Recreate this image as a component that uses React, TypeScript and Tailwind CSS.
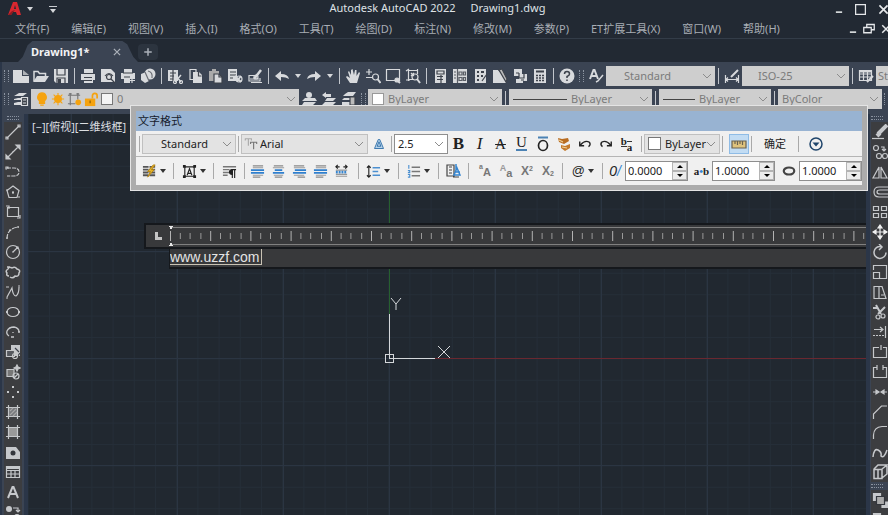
import type { ReactNode } from "react";

const MENUS = [
  "文件(F)",
  "编辑(E)",
  "视图(V)",
  "插入(I)",
  "格式(O)",
  "工具(T)",
  "绘图(D)",
  "标注(N)",
  "修改(M)",
  "参数(P)",
  "ET扩展工具(X)",
  "窗口(W)",
  "帮助(H)",
];

// 16x16 glyphs, drawn with currentColor
const GLYPHS: Record<string, ReactNode> = {
  new: (
    <>
      <path d="M0 2h9v6h7v7H0z" fill="currentColor" stroke="none" />
      <path d="M10 2l6 5h-6z" fill="#aeb1b6" stroke="none" />
    </>
  ),
  open: (
    <>
      <path d="M1 13V3.500h4l1.500 2h6V8" strokeWidth="1.500" />
      <path d="M4 8h12l-4 6H0z" fill="currentColor" stroke="none" />
    </>
  ),
  save: (
    <>
      <path d="M1 1h14v14H3l-2-2z" fill="currentColor" stroke="none" />
      <path d="M4 1v6h8V1M4 15v-5h8v5" stroke="#3d424b" />
      <path d="M5 11h3v4H5z" fill="#3d424b" stroke="none" />
    </>
  ),
  print: (
    <>
      <path d="M4 1h9v4H4z M1 6h14v6H1z M4 10h9v5H4z" fill="currentColor" stroke="none" />
      <path d="M3 5.500h11M4 9.500h8M4 12.500h8" stroke="#3d424b" />
    </>
  ),
  preview: (
    <>
      <path d="M1 1h10l4 4v9H1z" fill="currentColor" stroke="none" />
      <circle cx="9" cy="9" r="2.500" stroke="#3d424b" />
      <path d="M5 8q4-5 8 0M11 11l4 4" stroke="#3d424b" />
    </>
  ),
  plot: (
    <>
      <path d="M4 1h8v4H4z M1 5h14v6H1z M4 10h6v5H4z" fill="currentColor" stroke="none" />
      <path d="M3 5h10M4 9h6" stroke="#3d424b" />
      <path d="M9 12.500h6M12 10v5" />
    </>
  ),
  publish: (
    <>
      <circle cx="10" cy="6" r="5.500" fill="currentColor" stroke="none" />
      <path d="M1 6l5-2 3 9-4 2-4-3z" fill="currentColor" stroke="none" />
      <path d="M5 4l4 9M8 3q5 1 4 7" stroke="#6b6e75" />
    </>
  ),
  cut: (
    <>
      <path d="M1 2h10v11H1z" fill="currentColor" stroke="none" />
      <path d="M3 5h6M3 8h4M3 11h3M6 2v11" stroke="#3d424b" />
      <path d="M8 7l6 7M14 7l-6 7" strokeWidth="1.500" />
      <circle cx="8" cy="14" r="1.500" />
      <circle cx="14" cy="14" r="1.500" />
    </>
  ),
  copy: (
    <>
      <path d="M3 1.500h6v10H3z" />
      <path d="M6 4h6l3 3v8H6z" fill="currentColor" stroke="none" />
      <path d="M11.500 4v4h3" stroke="#3d424b" />
    </>
  ),
  paste: (
    <>
      <path d="M2 3h10v10H2z M5 1h4v3H5z" fill="#aaa" stroke="none" />
      <path d="M7 6h5l3 3v6H7z" fill="currentColor" stroke="#3d424b" />
      <path d="M12 6v3h3" stroke="#3d424b" />
    </>
  ),
  match: (
    <>
      <path d="M1 1h9v12H1z" fill="currentColor" stroke="none" />
      <path d="M3 4h6M3 7h6M3 10h3" stroke="#3d424b" />
      <path d="M8 8l6 6M10 13l4-5" strokeWidth="2" />
      <circle cx="12" cy="11" r="3" />
    </>
  ),
  blockedit: (
    <>
      <path d="M2 7.500h7M2 7v6h11v-3" />
      <path d="M7 11l7-9" strokeWidth="2.500" />
      <path d="M3 11h9M4 14.500h11" />
      <circle cx="9" cy="9" r="2" />
    </>
  ),
  undo: <path d="M1 8l6-5v3q7 0 8 5-3-2-8-2v4z" fill="currentColor" stroke="none" />,
  redo: <path d="M15 8L9 3v3q-7 0-8 5 3-2 8-2v4z" fill="currentColor" stroke="none" />,
  pan: (
    <path
      d="M5 15L1 9l1-1 3 2L3 4l1-1 2 4V2l1.500-1L9 7l1-5h1.500v6L14 4l1 1-3 10z"
      fill="currentColor"
      stroke="none"
    />
  ),
  zoomrt: (
    <>
      <path d="M1 4h6M4 1v6M1 9.500h6" />
      <circle cx="10.500" cy="9" r="3" />
      <path d="M12.500 11l3 4" strokeWidth="2" />
    </>
  ),
  zoomwin: (
    <>
      <path d="M1.500 1.500h13v11h-13z" />
      <circle cx="12" cy="12" r="2" fill="currentColor" />
      <path d="M13 13l2 2" strokeWidth="2" />
    </>
  ),
  zoomprev: (
    <>
      <path d="M3 2.500h10M3 11.500h6M3.500 1v12M12.500 1v5M1 3l3-2M1 12h4" />
      <path d="M6 5l3 3M9 5L6 8" />
      <circle cx="10" cy="9" r="3" />
      <path d="M12 11l3 4" strokeWidth="2" />
    </>
  ),
  props: (
    <>
      <path d="M3 1h11v14H3z" fill="currentColor" stroke="none" />
      <path d="M5 3h7v3H5zM5 8.500h6M5 11.500h6" stroke="#3d424b" />
      <path d="M9 7v8" stroke="#3d424b" />
    </>
  ),
  design: (
    <>
      <path d="M1 1h14v14H1z" fill="currentColor" stroke="none" />
      <path
        d="M5.500 1v14M7 4h3v3H7zM11.500 4h2v3h-2zM7 9.500h3v3H7zM11.500 9.500h2v3h-2zM2 4h2M2 7h2M2 10h2"
        stroke="#5a5e66"
      />
    </>
  ),
  palettes: (
    <>
      <path d="M3 1h11v14H3z" fill="currentColor" stroke="none" />
      <path d="M5 4h2M9 4h3M5 8h2M9 8h2M5 12h2" stroke="#3d424b" strokeWidth="2" />
      <path d="M10 13l5-7" stroke="#3d424b" />
    </>
  ),
  sheets: (
    <>
      <path d="M1 2h5l8 9v4H1z" fill="currentColor" stroke="none" />
      <path d="M7 2l3-1 5 10-1 3z" fill="#bbb" stroke="#3d424b" />
    </>
  ),
  markup: (
    <>
      <path d="M2 1h8v7H2z M7 6h8v7H7z M4 11h7v4H4z" fill="currentColor" stroke="none" />
      <path d="M7 5v5h5V5M4 5h3M9 12h3" stroke="#3d424b" />
    </>
  ),
  calc: (
    <>
      <path d="M2 1h12v14H2z" fill="currentColor" stroke="none" />
      <path d="M4 3.500h8" stroke="#3d424b" strokeWidth="2" />
      <path d="M4 7.500h8M4 10h8M4 12.500h8" stroke="#3d424b" strokeWidth="1.500" strokeDasharray="2 1" />
    </>
  ),
  help: (
    <>
      <circle cx="8" cy="8" r="7.500" fill="currentColor" stroke="none" />
      <path
        d="M5.500 6q0-2.500 2.500-2.500T10.500 6Q10.500 7.500 8 8.500v1.500M8 11.500v1.500"
        stroke="#3d424b"
        strokeWidth="1.500"
      />
    </>
  ),
  textstyle: (
    <>
      <path d="M2 11L5.500 2h1L10 11M3.500 8h5" strokeWidth="2" />
      <path d="M8 14l2-1 5-6" strokeWidth="1.500" />
    </>
  ),
  dimstyle: (
    <>
      <path d="M1.500 7v8M14.500 7v8M2 11.500h12M4 9.500l-2 2 2 2M12 9.500l2 2-2 2" />
      <path d="M7 9l7-7" strokeWidth="2" />
    </>
  ),
  tablestyle: (
    <>
      <path d="M1.500 2.500h12v10h-12zM1.500 6h12M1.500 9h12M5.500 3v9M9.500 3v9" />
      <path d="M2 3.500h11" strokeWidth="2" />
      <path d="M9 14l6-6" strokeWidth="2" />
    </>
  ),
  layers: (
    <>
      <path
        d="M1 5l5-3h8l-4 3z M1 8l4-1h5l-1 2H1z M1 12l4-1h3v3H1z"
        fill="currentColor"
        stroke="none"
      />
      <path d="M8.500 6.500h6v8h-6zM10 9h3M10 12h3" fill="#3d424b" />
    </>
  ),
  laycur: (
    <>
      <circle cx="8" cy="4" r="3" fill="currentColor" stroke="none" />
      <path d="M4 7h10l2 3H1z M3 11h12l-3 3H1z" fill="currentColor" stroke="none" />
    </>
  ),
  layprev: (
    <path d="M1 4l4-3v2h5v3H5v1z M6 7h9l-3 3H4z M4 11h11l-3 3H1z" fill="currentColor" stroke="none" />
  ),
  laystate: (
    <>
      <path d="M4 3l3-2h8l-3 4H2z M3 7h8v2H1z M1 11h8v3H1z" fill="currentColor" stroke="none" />
      <path d="M9 6h5v8H9z" fill="#bbb" stroke="#3d424b" />
    </>
  ),
  // draw toolbar
  line: <path d="M2 14L14 2M1 13h2v2H1zM13 1h2v2h-2z" />,
  xline: <path d="M3 13L13 3M1 15v-4l4 4zM15 1v4l-4-4zM8 7v2" fill="currentColor" />,
  pline: <path d="M2 4h7q5 0 5 4t-5 4H2M1 3h2v2H1z" strokeDasharray="4 1" />,
  polygon: (
    <>
      <path d="M8 2l6 4.500-2 7H4l-2-7z" />
      <path d="M8 7v3M7 8.500h2M1 6h2M13 13h2" />
    </>
  ),
  rect: <path d="M2.500 3.500h11v9h-11zM1 2h3v3M12 14h3v-3" />,
  arc: <path d="M2 15q0-11 12-12M1 14h2M4 6h2M13 2v2" strokeDasharray="5 1" />,
  circle: (
    <>
      <circle cx="8" cy="8" r="6.500" />
      <path d="M8 8l5-5M7 8h2M11 3h2v2" />
    </>
  ),
  cloud: (
    <path
      d="M4 12q-3 0-2-3Q0 7 3 5q1-3 4-1 3-2 5 1 4 1 2 4 0 4-4 3-2 3-5 1M2 3h3"
      strokeWidth="1.500"
    />
  ),
  spline: <path d="M1 3h3M2 13L7 4q1 8 4 8 3-2 3-9M1 14h2M13 2h2" />,
  ellipse: (
    <>
      <ellipse cx="8" cy="8" rx="6" ry="4.500" />
      <path d="M1 8h2M13 8h2M8 3v1" strokeWidth="2" />
    </>
  ),
  ellarc: <path d="M4 12Q1 10 2 7q2-4 7-4 5 1 5 5M8 8v1M13 8h2M6 13h3" strokeWidth="1.300" />,
  insert: (
    <>
      <path d="M6 1h9v11H6z" fill="currentColor" stroke="none" />
      <path d="M1.500 6.500h8v6h-8z" fill="#55585e" />
      <path d="M10 4l4 4M12 13l3-4" stroke="#3d424b" />
      <circle cx="10" cy="12" r="2.500" />
    </>
  ),
  block: (
    <>
      <path d="M2 5.500h7v7H2z" fill="#777" />
      <path d="M12 1l1 2 2 1-2 1-1 2-1-2-2-1 2-1z" fill="currentColor" />
      <circle cx="11" cy="12" r="3" />
      <path d="M9 14l4-4" />
    </>
  ),
  point: <path d="M7 3h2M2 8h2M12 8h2M7 13h2" strokeWidth="2" />,
  hatch: (
    <>
      <path d="M4 4h8v8H4z" fill="#77797d" stroke="none" />
      <path d="M3.500 1v14M12.500 1v14M1 3.500h14M1 12.500h14" />
      <path d="M5 7l3-3M5 11l6-6M8 12l4-4" stroke="#a5a5a5" />
    </>
  ),
  gradient: (
    <>
      <path d="M4 4h8v8H4z" fill="#999" stroke="none" />
      <path d="M3.500 1v14M12.500 1v14M1 3.500h14M1 12.500h14" />
    </>
  ),
  region: (
    <>
      <path d="M1 3h10l4 5v7H1z" fill="currentColor" stroke="none" />
      <circle cx="8" cy="9" r="2.500" fill="#33363c" stroke="none" />
    </>
  ),
  table: (
    <>
      <path d="M1.500 2.500h13v11h-13zM1.500 6.500h13M1.500 10h13M6 6v8M10 6v8" />
      <path d="M2 4h12" strokeWidth="2" />
    </>
  ),
  mtext: <path d="M3 14L7.500 3h1L13 14M5 10h6" strokeWidth="2" />,
  addsel: (
    <>
      <circle cx="4" cy="5" r="3" fill="currentColor" stroke="none" />
      <circle cx="12" cy="13" r="3" fill="currentColor" stroke="none" />
      <path d="M8 4h5v4M11 6l2 2 2-2" />
    </>
  ),
  // modify toolbar
  erase: (
    <>
      <path d="M6 10L15 1M5 12l3-3" strokeWidth="4" />
      <path d="M0 14.500h12" />
    </>
  ),
  copyobj: (
    <>
      <circle cx="4" cy="4" r="2.500" />
      <circle cx="7" cy="12" r="2.500" />
      <circle cx="13" cy="12" r="2.500" />
      <path d="M9 3h3v4M10 5l2 2 2-2" />
    </>
  ),
  mirror: <path d="M7 3v11H1zM9 3v11h6z" />,
  offset: <path d="M16 3H7Q2 3 2 8t5 5h9M16 6H8Q5 6 5 8t3 2h8" />,
  array: <path d="M1.500 2.500h5v4h-5zM9.500 2.500h5v4h-5zM1.500 9.500h5v4h-5zM9.500 9.500h5v4h-5z" />,
  move: (
    <path
      d="M8 2v12M2 8h12M8 1L6 4h4zM8 15l-2-3h4zM1 8l3-2v4zM15 8l-3-2v4z"
      fill="currentColor"
      stroke="#f0f0f0"
    />
  ),
  rotate: <path d="M14 8.500a6 6 0 1 1-5-6M7 0l3 3-3 3" strokeWidth="1.500" />,
  scale: <path d="M1.500 6V1.500h13v13H8M1.500 8.500h6v6h-6z" />,
  stretch: <path d="M2 2.500h5v12H2zM7 2.500h3l4 12H7M9 11h3" />,
  trim: (
    <>
      <path d="M4 1l5 9M13 3l-7 7M1 4h5" strokeWidth="2" />
      <circle cx="6" cy="13" r="2" />
      <circle cx="11" cy="12" r="2" />
    </>
  ),
  extend: (
    <>
      <path d="M13.500 2v12M2 5.500h9M8 3l3 2.500L8 8" />
      <path d="M1 11.500h12" strokeDasharray="2 1" />
    </>
  ),
  breakat: <path d="M7 3.500H1.500v10h13v-10H11M9 1v5" />,
  breakobj: <path d="M5 3.500H1.500v10h13v-10H11M5 1v5M11 1v5" />,
  join: <path d="M1 8h4M11 8h4M4 6l3 2-3 2zM12 6L9 8l3 2z" fill="currentColor" />,
  chamfer: <path d="M1.500 15v-5l8-8H15" />,
  fillet: <path d="M1.500 15v-4Q2 3 10 2.500h5" />,
  blend: <path d="M1 13q1-9 5-7t3 6q3 3 6-6" strokeWidth="1.500" />,
  explode: <path d="M2 5.500h8v9H2zM2 5l4-4h9l-5 4M15 2v8l-5 4M6 5v9" strokeWidth="1.500" />,
  draworder: (
    <>
      <path d="M1.500 1.500h7v7h-7z" fill="currentColor" />
      <path d="M10 10h6v6h-6z" fill="currentColor" />
      <path d="M4.500 4.500h8v8h-8z" fill="#aaa" stroke="#33363c" />
    </>
  ),
  // text formatting
  annot: <path d="M2 14L7 2h2l5 12zM5.500 11l2.500-6 2.500 6z" stroke="#2f6ea8" fill="#b9d4ea" />,
  overline: (
    <>
      <path d="M3 1.500h10" stroke="#4b82b4" strokeWidth="2" />
      <ellipse cx="8" cy="9.500" rx="4.500" ry="5" strokeWidth="1.700" />
    </>
  ),
  eraser: (
    <>
      <path d="M2 2l4 1 6-1 1 3-5 3-5-2z" fill="#b96d22" stroke="none" />
      <path d="M5 9l4 1 5-2v4l-5 3-4-3z" fill="#c47a2c" stroke="none" />
      <path d="M3 4l4 2M6 11l5 1" stroke="#f0cf96" />
    </>
  ),
  tundo: <path d="M2 5v5h5M3 9q5-6 10-3 2 3-1 5" strokeWidth="1.600" />,
  tredo: <path d="M14 5v5H9M13 9Q8 3 3 6q-2 3 1 5" strokeWidth="1.600" />,
  ruler: (
    <>
      <path d="M1 5h14v7H1z" fill="#dfc37d" stroke="#6b6250" />
      <path d="M4 5v3M6.500 5v4M9 5v3M11.500 5v4" stroke="#6b6250" />
    </>
  ),
  options: (
    <>
      <circle cx="8" cy="8" r="6" stroke="#1f456b" strokeWidth="1.500" />
      <path d="M4.500 6.500h7L8 10.500z" fill="#1f456b" stroke="none" />
    </>
  ),
  columns: (
    <>
      <path
        d="M1 3h13M1 6h13M1 9h13M1 12h13"
        stroke="#555"
        strokeWidth="2"
        strokeDasharray="6 1"
      />
      <path d="M12 1L6 8h3l-3 6 7-8h-3l4-5z" fill="#e8b62a" stroke="#b58413" strokeWidth="1" />
    </>
  ),
  mjust: (
    <>
      <path d="M3 3h10v10H3z" />
      <path d="M1 1h3v3H1zM12 1h3v3h-3zM1 12h3v3H1zM12 12h3v3h-3z" fill="currentColor" stroke="none" />
      <path d="M5.500 12L8 5l2.500 7M6 10h4" />
    </>
  ),
  para: (
    <>
      <path d="M1 3h14M1 6h7M1 9h7M1 12h5" stroke="#777" strokeWidth="1.500" />
      <path d="M11 6v9M13.500 6v9M10 6h5" />
      <path d="M11 6q-3 0-3 2.500t3 2.500z" fill="currentColor" />
    </>
  ),
  alignl: (
    <>
      <path d="M3 2h11M3 14h8" stroke="#888" strokeWidth="1.500" />
      <path d="M1 6.500h14M1 9.500h14" stroke="#2f7fcd" strokeWidth="2" />
      <path d="M3 4h11M3 12h11" stroke="#999" />
    </>
  ),
  alignc: (
    <>
      <path d="M3 2h10M4 14h8" stroke="#888" strokeWidth="1.500" />
      <path d="M4 6.500h8M2 9.500h12" stroke="#2f7fcd" strokeWidth="2" />
      <path d="M2 4h12M3 12h10" stroke="#999" />
    </>
  ),
  alignr: (
    <>
      <path d="M2 2h11M6 14h8" stroke="#888" strokeWidth="1.500" />
      <path d="M3 6.500h12M1 9.500h14" stroke="#2f7fcd" strokeWidth="2" />
      <path d="M2 4h12M2 12h11" stroke="#999" />
    </>
  ),
  distribute: (
    <>
      <path d="M2 3h4M10 3h4M4 1L2 3l2 2M12 1l2 2-2 2" />
      <path d="M2 8.500h12" stroke="#3585d0" strokeWidth="3" strokeDasharray="2 1" />
      <path d="M2 6.500h12M2 11h12M2 13h12" stroke="#999" />
    </>
  ),
  spacing: (
    <>
      <path d="M3 2v12M1 4l2-2 2 2M1 12l2 2 2-2" />
      <path d="M7 4h8M7 8h6M7 12h8" stroke="#4b8fd0" strokeWidth="1.500" />
    </>
  ),
  bullets: (
    <>
      <path d="M3 1v4M2 7h2v2H2M2 11h2v3H2" stroke="#4b8fd0" />
      <path d="M6 3.500h9M6 8h9M6 12.500h9" stroke="#777" strokeWidth="1.500" />
    </>
  ),
  field: (
    <>
      <path d="M2 2h7v11H2zM4 4h3M4 7h3M4 10h3M8 14h6" stroke="#444" />
      <path d="M11 1v6M9 12l3-7 3 7zM10 9h5" stroke="#3585d0" strokeWidth="1.500" />
    </>
  ),
  widthf: <ellipse cx="8" cy="8" rx="6" ry="4" stroke="#444" strokeWidth="2.500" />,
  tt: (
    <>
      <path d="M1 2h8M5 2v8M1.500 2v2M8.500 2v2" stroke="#aaa" strokeWidth="1.300" />
      <path d="M7 6h8M11 6v8M7.500 6v2M14.500 6v2" stroke="#777" strokeWidth="1.300" />
    </>
  ),
  // layer state
  bulb: <path d="M8 1a5 5 0 0 1 3 9v3H5v-3a5 5 0 0 1 3-9zM6 15h4" fill="#f5a310" stroke="#f5a310" />,
  sun: (
    <>
      <circle cx="8" cy="8" r="4.500" fill="#f5a310" stroke="none" />
      <path d="M8 1v14M1 8h14M3 3l10 10M13 3L3 13" stroke="#f5a310" />
    </>
  ),
  vpfreeze: (
    <>
      <path d="M3.500 1v13M11.500 1v7M1 3.500h13M1 12.500h8M2 2h3M10 2h3" stroke="#777" />
      <circle cx="12" cy="11" r="3" fill="#f5a310" stroke="none" />
    </>
  ),
  lock: (
    <>
      <path d="M1 7h11v8H1z" fill="#f5a310" stroke="none" />
      <path d="M9 7V4q0-2.500 2.500-2.500T14 4v3" stroke="#f5a310" strokeWidth="1.800" />
      <path d="M6.500 9v3" stroke="#8a5a00" />
    </>
  ),
  plus: <path d="M8 3v10M3 8h10" strokeWidth="2" />,
  close: <path d="M3 3l10 10M13 3L3 13" strokeWidth="2" />,
  minimize: <path d="M3 13h10" strokeWidth="2.500" />,
  maximize: <path d="M2 2h12v12H2z" strokeWidth="1.500" />,
  restore: <path d="M5 6V2h10v7h-4M1 6h10v7H1z" strokeWidth="1.700" />,
};

function Icon({ name, className = "size-4" }: { name: string; className?: string }) {
  return (
    <svg
      viewBox="0 0 16 16"
      className={"shrink-0 " + className}
      fill="none"
      stroke="currentColor"
      strokeWidth="1.200"
      aria-hidden="true"
    >
      {GLYPHS[name]}
    </svg>
  );
}

function Caret({ className = "border-t-[#d5d7da]" }: { className?: string }) {
  return (
    <span
      className={
        "inline-block border-x-[3px] border-t-[4px] border-x-transparent " + className
      }
    />
  );
}

function Tool({ name }: { name: string }) {
  return (
    <button
      type="button"
      aria-label={name}
      className="flex size-5 shrink-0 items-center justify-center"
    >
      <Icon name={name} />
    </button>
  );
}

function DropArrow({ label }: { label: string }) {
  return (
    <button
      type="button"
      aria-label={label}
      className="flex h-5 w-3 shrink-0 items-center justify-center"
    >
      <Caret />
    </button>
  );
}

function Sep() {
  return (
    <span className="flex w-[7px] shrink-0 justify-center">
      <span className="h-4 w-px bg-[#c2c6cc]" />
    </span>
  );
}

function Grip() {
  return <span className="mx-[2px] h-3 w-[5px] shrink-0 border-x border-dotted border-[#8b93a0]" />;
}

function Combo({
  label,
  value,
  width,
  box = "h-5 bg-[#cecece] text-[#7b7b7b]",
  pad = "pl-1",
  children,
}: {
  label: string;
  value: string;
  width: string;
  box?: string;
  pad?: string;
  children?: ReactNode;
}) {
  return (
    <div className={"flex shrink-0 items-center pr-1 " + box + " " + width}>
      {children}
      <select
        aria-label={label}
        className={"min-w-0 flex-1 appearance-none bg-transparent outline-none " + pad}
      >
        <option>{value}</option>
      </select>
      <svg viewBox="0 0 8 8" className="size-2 shrink-0" fill="none" stroke="#8c8c8c" aria-hidden="true">
        <path d="M0 2l4 4 4-4" />
      </svg>
    </div>
  );
}

function TitleBar() {
  return (
    <header className="flex h-[18px] shrink-0 items-center justify-between pl-[7px]">
      <div className="flex flex-1 items-center gap-1">
        <svg viewBox="0 0 16 16" className="size-4" aria-hidden="true">
          <path d="M1 14L6 1h4l4 13h-4l-1-3H6l-2 3zM7 8h2L8 4z" fill="#d9272f" />
          <path d="M1 14l4-4 3-1-4 5z" fill="#8e1b20" />
        </svg>
        <Caret />
        <button type="button" aria-label="quick access" className="ml-3 flex flex-col items-center gap-[2px]">
          <span className="h-px w-2 bg-[#c9ccd1]" />
          <Caret />
        </button>
      </div>
      <h1 className="flex gap-[15px] self-start pr-5 text-[11px] leading-[15px] text-[#dfe2e6]">
        <span>Autodesk AutoCAD 2022</span>
        <span>Drawing1.dwg</span>
      </h1>
      <div className="flex flex-1 items-center justify-end gap-[10px] text-[#e6e8ea]">
        <button type="button" aria-label="minimize">
          <Icon name="minimize" className="size-[10px]" />
        </button>
        <button type="button" aria-label="maximize">
          <Icon name="maximize" className="size-[13px]" />
        </button>
        <button type="button" aria-label="close" className="-mr-[2px]">
          <Icon name="close" className="size-[13px]" />
        </button>
      </div>
    </header>
  );
}

function MenuBar() {
  return (
    <nav className="flex h-[21px] shrink-0 items-center justify-between border-b border-[#333c48] pt-px pl-[15px] text-[11px] leading-[16px] text-[#a9aeb5]">
      <div className="flex gap-[22px]">
        {MENUS.map((m) => (
          <button key={m} type="button" className="whitespace-nowrap">
            {m}
          </button>
        ))}
      </div>
      <div className="flex items-center gap-[5px] text-[#e6e8ea]">
        <button type="button" aria-label="minimize drawing">
          <Icon name="minimize" className="size-[10px]" />
        </button>
        <button type="button" aria-label="restore drawing">
          <Icon name="restore" className="size-3" />
        </button>
        <button type="button" aria-label="close drawing" className="-mr-1">
          <Icon name="close" className="size-3" />
        </button>
      </div>
    </nav>
  );
}

function FileTabs() {
  return (
    <div className="flex h-[23px] shrink-0 items-end pl-[18px]">
      <div className="flex h-[21px] w-[120px] items-center justify-between bg-[#3b4453] pr-4 pl-[13px] [clip-path:polygon(0_100%,4%_75%,8%_20%,12%_0,87%_0,91%_15%,96%_75%,100%_100%)]">
        <button type="button" className="text-[11px] leading-[16px] font-bold text-[#f2f3f5]">
          Drawing1*
        </button>
        <button type="button" aria-label="close tab" className="text-[#a9afb8]">
          <Icon name="close" className="size-[10px]" />
        </button>
      </div>
      <button
        type="button"
        aria-label="new tab"
        className="mb-[2px] flex h-4 w-5 items-center justify-center rounded bg-[#2c343f] text-[#a9afb8]"
      >
        <Icon name="plus" className="size-3" />
      </button>
    </div>
  );
}

function StandardToolbar() {
  return (
    <div className="flex h-6 items-center text-[#d8dadd]">
      <Grip />
      <Tool name="new" />
      <Tool name="open" />
      <Tool name="save" />
      <Sep />
      <Tool name="print" />
      <Tool name="preview" />
      <Tool name="plot" />
      <Tool name="publish" />
      <Sep />
      <Tool name="cut" />
      <Tool name="copy" />
      <Tool name="paste" />
      <Tool name="match" />
      <Tool name="blockedit" />
      <Sep />
      <Tool name="undo" />
      <DropArrow label="undo list" />
      <Tool name="redo" />
      <DropArrow label="redo list" />
      <Sep />
      <Tool name="pan" />
      <Tool name="zoomrt" />
      <Tool name="zoomwin" />
      <Tool name="zoomprev" />
      <Sep />
      <Tool name="props" />
      <Tool name="design" />
      <Tool name="palettes" />
      <Tool name="sheets" />
      <Tool name="markup" />
      <Tool name="calc" />
      <Sep />
      <Tool name="help" />
      <Grip />
      <Tool name="textstyle" />
      <Combo label="text style" value="Standard" width="w-[109px]" pad="pl-[18px]" />
      <Sep />
      <Tool name="dimstyle" />
      <Combo label="dimension style" value="ISO-25" width="w-[107px]" pad="pl-4" />
      <Sep />
      <Tool name="tablestyle" />
      <Combo label="table style" value="Standard" width="w-[107px]" pad="pl-[2px]" />
    </div>
  );
}

function LayerToolbar() {
  return (
    <div className="flex h-[22px] items-center text-[#d8dadd]">
      <Grip />
      <Tool name="layers" />
      <Combo
        label="layer"
        value="0"
        width="w-[268px]"
        box="h-5 gap-[2px] bg-[#cecece] pl-1 text-[#7b7b7b]"
        pad="pl-[2px]"
      >
        <Icon name="bulb" className="size-[14px]" />
        <Icon name="sun" className="size-[14px]" />
        <Icon name="vpfreeze" className="size-[15px]" />
        <Icon name="lock" className="size-[15px]" />
        <span className="size-3 border border-[#777] bg-[#f4f4f4]" />
      </Combo>
      <Tool name="laycur" />
      <Tool name="layprev" />
      <Tool name="laystate" />
      <Grip />
      <Combo label="color" value="ByLayer" width="w-[134px]" box="h-5 bg-[#cecece] pl-1 text-[#7b7b7b]">
        <span className="size-3 border border-[#999] bg-white" />
      </Combo>
      <Sep />
      <Combo label="linetype" value="ByLayer" width="w-[143px]" box="h-5 bg-[#cecece] pl-1 text-[#7b7b7b]">
        <span className="h-px w-[54px] bg-[#444]" />
      </Combo>
      <Sep />
      <Combo label="lineweight" value="ByLayer" width="w-[112px]" box="h-5 bg-[#cecece] pl-1 text-[#7b7b7b]">
        <span className="h-px w-8 bg-[#444]" />
      </Combo>
      <Sep />
      <Combo label="plot style" value="ByColor" width="w-[104px]" />
      <Grip />
    </div>
  );
}

function SideTool({ name }: { name: string }) {
  return (
    <button
      type="button"
      aria-label={name}
      className="flex h-5 w-[18px] shrink-0 items-center justify-center bg-[#3c3d40]"
    >
      <Icon name={name} />
    </button>
  );
}

const DRAW = [
  "line", "xline", "pline", "polygon", "rect", "arc", "circle", "cloud", "spline", "ellipse",
  "ellarc", "insert", "block", "point", "hatch", "gradient", "region", "table", "mtext", "addsel",
];
const MODIFY = [
  "erase", "copyobj", "mirror", "offset", "array", "move", "rotate", "scale", "stretch", "trim",
  "extend", "breakat", "breakobj", "join", "chamfer", "fillet", "blend", "explode",
];

function SideGrip() {
  return <span className="my-[2px] h-1 w-3 shrink-0 border-y border-dotted border-[#8b93a0]" />;
}

function Canvas() {
  return (
    <main className="relative min-w-0 flex-1 overflow-hidden bg-[#212830]">
      <svg className="absolute inset-0 size-full" fill="none" shapeRendering="crispEdges" aria-hidden="true">
        <defs>
          <pattern id="minor" x="21" y="9" width="21.200" height="21.400" patternUnits="userSpaceOnUse">
            <path d="M0 .5h22M.5 0v22" stroke="#252e38" />
          </pattern>
          <pattern id="major" x="43" y="30" width="106" height="107" patternUnits="userSpaceOnUse">
            <path d="M0 .5h106M.5 0v107" stroke="#2b3542" />
          </pattern>
        </defs>
        <rect width="100%" height="100%" fill="url(#minor)" />
        <rect width="100%" height="100%" fill="url(#major)" />
        <rect x="361" y="0" width="1" height="200" fill="#27602f" />
        <rect x="406" y="244" width="100%" height="1" fill="#6a2830" />
        <g stroke="#d4d7da" strokeWidth="1">
          <path d="M361.500 200v44h45M357.500 240.500h8v8h-8z" />
          <path d="M363 184l5 6 5-6M368 190v6M410 232l12 12M422 232l-12 12" shapeRendering="auto" />
        </g>
      </svg>

      <p className="relative pt-[6px] pl-[4px] text-[11px] leading-[14px] text-[#dcdfe2]">[−][俯视][二维线框]</p>

      {/* in-place text editor */}
      <section className="absolute top-[109px] right-0 left-[116px]">
        <div className="flex h-[26px] items-center border-2 border-r-0 border-[#15181c] bg-[#38393b] pl-2">
          <svg viewBox="0 0 8 8" className="size-2" aria-hidden="true">
            <path d="M1 0h3v5h4v3H1z" fill="#c4c4c4" />
          </svg>
          <svg className="ml-[7px] h-[22px] min-w-0 flex-1" fill="none" shapeRendering="crispEdges" aria-hidden="true">
            <defs>
              <pattern id="ticks" x="1" width="40.200" height="22" patternUnits="userSpaceOnUse">
                <path d="M.5 6v10" stroke="#b4b4b4" />
                <path d="M10.500 8v6M20.500 8v6M30.500 8v6" stroke="#9a9a9a" />
              </pattern>
            </defs>
            <path d="M1 2.500h2000M1 19.500h2000" stroke="#808080" />
            <rect x="1" width="100%" height="22" fill="url(#ticks)" />
            <path d="M0 1h4l-2 4zM0 21h4l-2-4z" fill="#e8e8e8" />
          </svg>
        </div>
        <div className="ml-[25px] flex h-5 items-start border-b-2 border-l border-[#15181c] bg-[#38393b]">
          <input
            aria-label="text"
            defaultValue="www.uzzf.com"
            className="h-4 w-[92px] border-r border-b border-[#c9c3b4] bg-transparent font-['Liberation_Sans',sans-serif] text-[14px] leading-[15px] text-[#e4e4e4] outline-none"
          />
        </div>
      </section>
    </main>
  );
}

function Workspace() {
  return (
    <div className="flex min-h-0 flex-1">
      <aside className="flex w-7 shrink-0 flex-col items-center overflow-hidden border-r-4 border-l-2 border-[#2b3648] bg-[#3b4453] text-[#c6c8cb]">
        <SideGrip />
        {DRAW.map((n) => (
          <SideTool key={n} name={n} />
        ))}
      </aside>
      <Canvas />
      <aside className="flex w-[22px] shrink-0 flex-col items-start overflow-hidden border-l-4 border-[#2b3648] bg-[#3b4453] pl-px text-[#c6c8cb]">
        <SideGrip />
        {MODIFY.map((n) => (
          <SideTool key={n} name={n} />
        ))}
        <SideGrip />
        <SideTool name="draworder" />
        <SideTool name="draworder" />
      </aside>
    </div>
  );
}

function FSep() {
  return (
    <span className="flex w-[5px] shrink-0 justify-center">
      <span className="h-4 w-px bg-[#a9a9a9]" />
    </span>
  );
}

function FButton({
  label,
  width = "w-[21px]",
  children,
}: {
  label: string;
  width?: string;
  children: ReactNode;
}) {
  return (
    <button
      type="button"
      aria-label={label}
      className={"flex h-5 shrink-0 items-center justify-center " + width}
    >
      {children}
    </button>
  );
}

function FDrop({ name, children }: { name: string; children?: ReactNode }) {
  return (
    <button
      type="button"
      aria-label={name}
      className="flex h-5 w-[35px] shrink-0 items-center justify-center gap-[3px]"
    >
      {children ?? <Icon name={name} className="size-[15px]" />}
      <Caret className="border-t-[#333]" />
    </button>
  );
}

function Spinner({ label, value }: { label: string; value: string }) {
  return (
    <div className="flex h-5 w-[63px] shrink-0 border border-[#8e8e8e] bg-white">
      <input
        aria-label={label}
        defaultValue={value}
        className="w-[46px] min-w-0 bg-transparent pl-[2px] outline-none"
      />
      <div className="flex flex-1 flex-col">
        <button
          type="button"
          aria-label={label + " up"}
          className="flex flex-1 items-center justify-center border border-[#b4b4b4] bg-[#ececec]"
        >
          <span className="border-x-[3px] border-b-[3px] border-x-transparent border-b-black" />
        </button>
        <button
          type="button"
          aria-label={label + " down"}
          className="flex flex-1 items-center justify-center border border-[#b4b4b4] bg-[#ececec]"
        >
          <span className="border-x-[3px] border-t-[3px] border-x-transparent border-t-black" />
        </button>
      </div>
    </div>
  );
}

function TextFormatting() {
  return (
    <section className="absolute top-[105px] left-[130px] w-[738px] border border-[#e4e4e4] bg-[#acacac] p-[5px] text-[11px] leading-[16px] text-[#222]">
      <h2 className="h-5 bg-[#98b3d2] pl-[2px] leading-[20px] text-[#16202c]">文字格式</h2>
      <div className="bg-[#f0f0f0]">
        <div className="flex h-[26px] items-center border-b border-[#b5b5b5] pl-px">
          <FSep />
          <Combo
            label="style"
            value="Standard"
            width="w-[94px]"
            box="h-5 border border-[#c0c0c0] bg-[#e3e3e3]"
            pad="pl-[18px]"
          />
          <FSep />
          <Combo
            label="font"
            value="Arial"
            width="w-[127px]"
            box="h-5 border border-[#c0c0c0] bg-[#e3e3e3] pl-[2px]"
            pad="pl-[2px]"
          >
            <Icon name="tt" className="size-[14px]" />
          </Combo>
          <FButton label="annotative">
            <Icon name="annot" className="size-3" />
          </FButton>
          <FSep />
          <Combo
            label="height"
            value="2.5"
            width="w-[54px]"
            box="h-5 border border-[#8e8e8e] bg-white"
            pad="pl-[3px]"
          />
          <FButton label="bold">
            <span className="font-['Liberation_Serif',serif] text-[17px] font-bold">B</span>
          </FButton>
          <FButton label="italic">
            <span className="font-['Liberation_Serif',serif] text-[17px] italic">I</span>
          </FButton>
          <FButton label="strikethrough">
            <span className="font-['Liberation_Serif',serif] text-[15px] line-through">A</span>
          </FButton>
          <FButton label="underline">
            <span className="border-b-2 border-[#4b82b4] font-['Liberation_Serif',serif] text-[15px] leading-[13px]">
              U
            </span>
          </FButton>
          <FButton label="overline">
            <Icon name="overline" />
          </FButton>
          <FButton label="clear formatting">
            <Icon name="eraser" />
          </FButton>
          <FButton label="undo">
            <Icon name="tundo" className="size-[14px]" />
          </FButton>
          <FButton label="redo">
            <Icon name="tredo" className="size-[14px]" />
          </FButton>
          <FButton label="stack">
            <span className="flex items-start font-['Liberation_Serif',serif] text-[11px] leading-[10px] font-bold">
              <span className="border-b border-[#333]">b</span>
              <span className="mt-[5px] border-t border-[#333]">a</span>
            </span>
          </FButton>
          <span className="w-[2px]" />
          <FSep />
          <Combo
            label="text color"
            value="ByLayer"
            width="w-[76px]"
            box="h-5 border border-[#c0c0c0] bg-[#e3e3e3] pl-[3px]"
            pad="pl-1"
          >
            <span className="size-[13px] shrink-0 border border-[#777] bg-white" />
          </Combo>
          <FSep />
          <span className="w-1" />
          <button
            type="button"
            aria-label="ruler"
            className="flex size-5 items-center justify-center border border-[#8fbce6] bg-[#c2dcf3]"
          >
            <Icon name="ruler" />
          </button>
          <FSep />
          <button type="button" className="w-[42px]">
            确定
          </button>
          <FSep />
          <FButton label="options" width="w-[30px]">
            <Icon name="options" />
          </FButton>
        </div>
        <div className="flex h-[28px] items-center">
          <FDrop name="columns" />
          <FSep />
          <FDrop name="mjust" />
          <FSep />
          <FButton label="paragraph" width="w-[26px]">
            <Icon name="para" className="size-[15px]" />
          </FButton>
          <FSep />
          <FButton label="left">
            <Icon name="alignl" className="size-[15px]" />
          </FButton>
          <FButton label="center">
            <Icon name="alignc" className="size-[15px]" />
          </FButton>
          <FButton label="right">
            <Icon name="alignr" className="size-[15px]" />
          </FButton>
          <FButton label="justify">
            <Icon name="alignl" className="size-[15px]" />
          </FButton>
          <FButton label="distribute">
            <Icon name="distribute" className="size-[15px]" />
          </FButton>
          <span className="w-[5px]" />
          <FSep />
          <FDrop name="spacing" />
          <FSep />
          <FDrop name="bullets" />
          <FSep />
          <FButton label="field" width="w-[25px]">
            <Icon name="field" />
          </FButton>
          <FSep />
          <span className="w-[5px]" />
          <FButton label="uppercase">
            <span className="flex items-start font-['Liberation_Sans',sans-serif] text-[11px] leading-[13px] font-bold text-[#777]">
              <span className="text-[7px] leading-[7px]">a</span>
              <span className="mt-[3px]">A</span>
            </span>
          </FButton>
          <FButton label="lowercase">
            <span className="flex items-start font-['Liberation_Sans',sans-serif] text-[9px] leading-[9px] font-bold text-[#999]">
              <span>A</span>
              <span className="mt-[5px] text-[11px] text-[#777]">a</span>
            </span>
          </FButton>
          <FButton label="superscript">
            <span className="flex items-start font-['Liberation_Sans',sans-serif] text-[12px] leading-[12px] font-bold text-[#777]">
              X<span className="text-[7px] leading-[7px]">2</span>
            </span>
          </FButton>
          <FButton label="subscript">
            <span className="flex items-end font-['Liberation_Sans',sans-serif] text-[12px] leading-[12px] font-bold text-[#777]">
              X<span className="text-[7px] leading-[7px]">2</span>
            </span>
          </FButton>
          <span className="w-[2px]" />
          <FSep />
          <FDrop name="symbol">
            <span className="font-['Liberation_Sans',sans-serif] text-[13px] italic">@</span>
          </FDrop>
          <FSep />
          <FButton label="oblique" width="w-[20px]">
            <span className="font-['Liberation_Sans',sans-serif] text-[14px] italic">
              0<span className="text-[#3585d0]">/</span>
            </span>
          </FButton>
          <Spinner label="oblique angle" value="0.0000" />
          <span className="w-1" />
          <FButton label="tracking">
            <span className="font-['Liberation_Serif',serif] text-[11px] font-bold">
              a<span className="text-[#3585d0]">•</span>b
            </span>
          </FButton>
          <Spinner label="tracking factor" value="1.0000" />
          <span className="w-1" />
          <FButton label="width factor">
            <Icon name="widthf" className="size-[14px]" />
          </FButton>
          <Spinner label="width factor value" value="1.0000" />
        </div>
      </div>
    </section>
  );
}

export default function App() {
  return (
    <div className="relative flex h-screen flex-col overflow-hidden bg-[#222933] font-['Noto_Sans','Noto_Sans_CJK_SC',sans-serif] text-[11px] leading-[16px]">
      <TitleBar />
      <MenuBar />
      <FileTabs />
      <div className="shrink-0 border-l-2 border-[#2b3648] bg-[#3b4453] pt-[2px] pb-1">
        <StandardToolbar />
        <LayerToolbar />
      </div>
      <Workspace />
      <TextFormatting />
    </div>
  );
}
